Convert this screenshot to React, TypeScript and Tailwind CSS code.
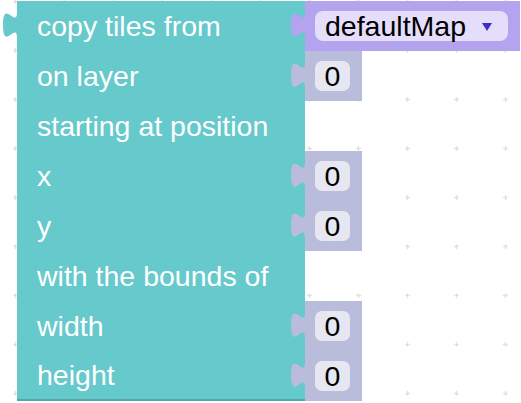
import React from "react";

const TEAL = "#66c9cb";

type Row = { label: string; input?: "dropdown" | "number" };

const rows: Row[] = [
  { label: "copy tiles from", input: "dropdown" },
  { label: "on layer", input: "number" },
  { label: "starting at position" },
  { label: "x", input: "number" },
  { label: "y", input: "number" },
  { label: "with the bounds of" },
  { label: "width", input: "number" },
  { label: "height", input: "number" },
];

const Tab = ({ color, className }: { color: string; className: string }) => (
  <svg className={className} width="15" height="27" viewBox="0 0 15 27">
    <path d="M15,0 c0,17.5 -14,-14 -14,13.1 s14,-4.4 14,13.1 Z" fill={color} />
  </svg>
);

const Dropdown = () => (
  <div className="relative h-[50px] w-[215px] bg-[#b4a3ee] flex items-center pl-[10px]">
    <Tab color="#b4a3ee" className="absolute left-[-15px] top-[11px]" />
    <div className="h-[30px] w-[193px] rounded-[8px] bg-[#e4defa] flex items-center pl-[10px] text-black">
      <span>defaultMap</span>
      <svg className="ml-[16px] mt-[1px]" width="10" height="8" viewBox="0 0 10 8">
        <path d="M0,0 L10,0 L5,8 Z" fill="#3c2ec6" />
      </svg>
    </div>
  </div>
);

const NumberBlock = () => (
  <div className="relative h-[50px] w-[57px] bg-[#b9bcda] flex items-center pl-[10px]">
    <Tab color="#b9bcda" className="absolute left-[-15px] top-[11px]" />
    <div className="h-[30px] w-[35px] rounded-[7px] bg-[#e6e7f1] flex items-center justify-center text-black">
      0
    </div>
  </div>
);

const App: React.FC = () => {
  return (
    <div className="relative w-[521px] h-[403px] overflow-hidden bg-white font-['Liberation_Sans',Arial,sans-serif] text-[28.5px] leading-none">
      <svg className="absolute inset-0" width="521" height="403">
        <defs>
          <pattern id="grid" x="13" y="-1" width="49" height="49" patternUnits="userSpaceOnUse">
            <rect x="0" y="2" width="5" height="1" fill="#dcdcdc" />
            <rect x="2" y="0" width="1" height="5" fill="#dcdcdc" />
            <rect x="1" y="1" width="3" height="3" fill="#ececec" />
            <rect x="2" y="2" width="1" height="1" fill="#cfcfcf" />
          </pattern>
        </defs>
        <rect width="521" height="403" fill="url(#grid)" />
      </svg>

      <div className="relative flex flex-col pl-[17px] pt-[1px]">
        <Tab color={TEAL} className="absolute left-[2px] top-[12px]" />
        {rows.map((r, i) => (
          <div key={i} className="flex h-[50px]">
            <div
              className={
                i === rows.length - 1
                  ? "w-[288px] bg-[#66c9cb] flex items-center pl-[20px] text-white border-b-[2px] border-[#4fa9ab]"
                  : "w-[288px] bg-[#66c9cb] flex items-center pl-[20px] text-white"
              }
            >
              {r.label}
            </div>
            {r.input === "dropdown" && <Dropdown />}
            {r.input === "number" && <NumberBlock />}
          </div>
        ))}
      </div>
    </div>
  );
};

export default App;
